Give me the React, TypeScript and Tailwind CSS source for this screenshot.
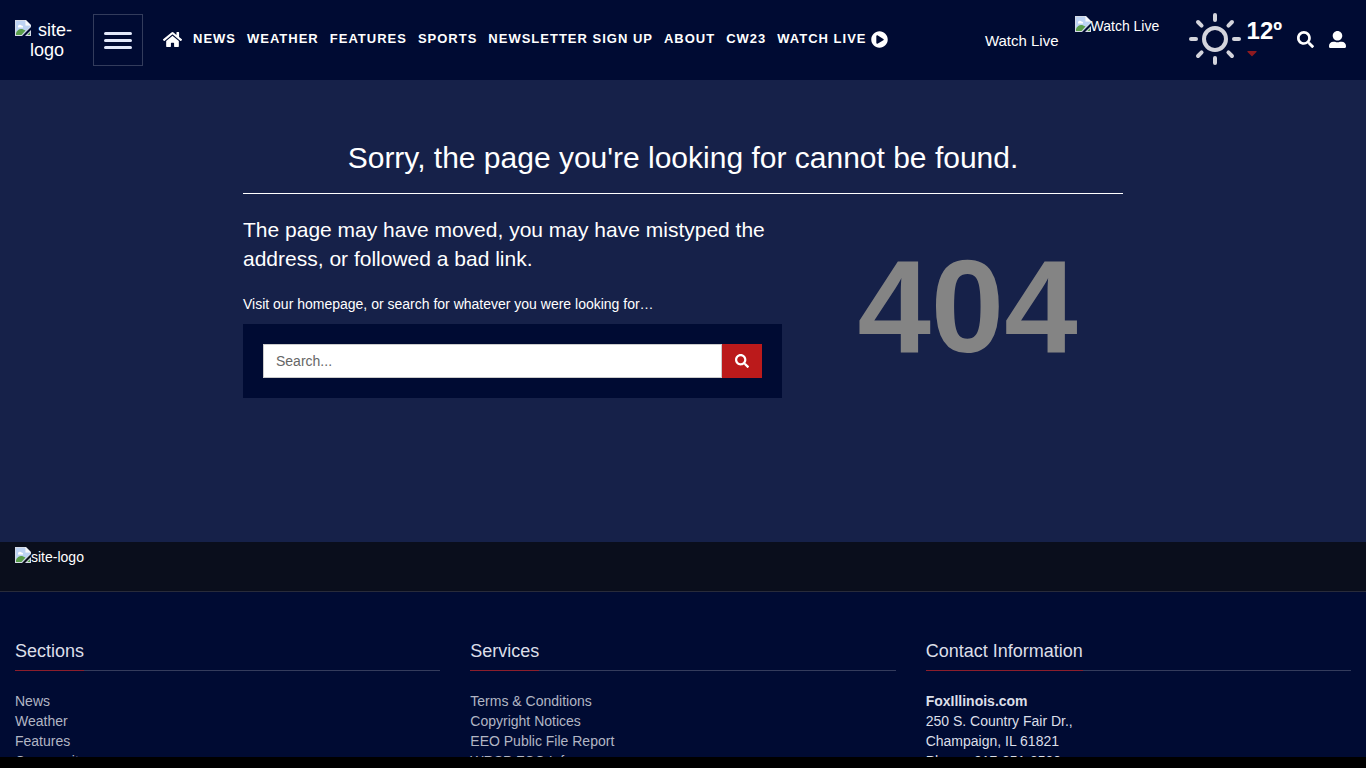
import React from 'react';
import { FaCaretDown, FaHome, FaPlayCircle, FaSearch, FaUserAlt } from 'react-icons/fa';

interface FooterColumnProps {
  title: string;
  children: React.ReactNode;
}

const navigation = ['News', 'Weather', 'Features', 'Sports', 'Newsletter Sign Up', 'About', 'CW23'];

const sections = ['News', 'Weather', 'Features', 'Community'];

const services = ['Terms & Conditions', 'Copyright Notices', 'EEO Public File Report', 'WRSP FCC Info'];

const rays = [0, 45, 90, 135, 180, 225, 270, 315];

const BrokenImage: React.FC<{ className?: string }> = ({ className }) => (
  <svg viewBox="0 0 16 16" className={`h-4 w-4 shrink-0 ${className ?? ''}`} aria-hidden="true">
    <path d="M0 0h11l5 5v2L7 16H0z" fill="#d5dbe6" />
    <path d="M1 1h9.500v4.500H15v1.200L6.700 15H1z" fill="#bdd3f3" />
    <path d="M3 6.500a2 2 0 0 1 3.500-1A1.500 1.500 0 0 1 8 7.500H3z" fill="#fff" />
    <path d="M1 13c2-4 5-5.500 9.500-2.500L6.500 15H1z" fill="#5a9e4a" />
    <path d="M10.500 0v5.500H16z" fill="#f7f9fc" />
    <path d="M16 10v6h-6z" fill="#d5dbe6" />
    <path d="M15 12.300V15h-2.700z" fill="#5a9e4a" />
  </svg>
);

const SunIcon = () => (
  <svg viewBox="0 0 52 52" className="h-[52px] w-[52px]" fill="none" stroke="#d3d4dc" aria-hidden="true">
    <circle cx="26" cy="26" r="11" strokeWidth="4" />
    {rays.map((angle) => (
      <path key={angle} d="M26 2v5" strokeWidth="4" strokeLinecap="round" transform={`rotate(${angle} 26 26)`} />
    ))}
  </svg>
);

const Header = () => (
  <header className="flex h-20 items-center bg-[#000b33] px-[15px] text-white">
    <a href="#" className="block w-16 text-center text-lg leading-5">
      <BrokenImage className="float-left" />
      site-logo
    </a>
    <button
      type="button"
      aria-label="Menu"
      className="ml-[14px] flex h-[52px] w-[50px] flex-col items-center justify-center gap-1 border border-[#333c5c]"
    >
      <span className="h-[3px] w-7 rounded-full bg-[#e3e9fb]" />
      <span className="h-[3px] w-7 rounded-full bg-[#e3e9fb]" />
      <span className="h-[3px] w-7 rounded-full bg-[#e3e9fb]" />
    </button>

    <nav className="ml-5 flex items-center gap-[11px] pb-0.5 text-[13px] font-bold tracking-[1px] whitespace-nowrap uppercase">
      <a href="#" aria-label="Home">
        <FaHome className="h-[19px] w-[19px]" />
      </a>
      {navigation.map((item) => (
        <a key={item} href="#">
          {item}
        </a>
      ))}
      <a href="#" className="flex items-center gap-1">
        Watch Live
        <FaPlayCircle className="h-[17px] w-[17px]" />
      </a>
    </nav>

    <div className="ml-auto flex items-center pb-0.5">
      <a href="#" className="pt-1 text-[15px]">
        Watch Live
      </a>
      <a href="#" className="ml-4 flex h-[46px] w-[98px] items-start text-sm">
        <BrokenImage />
        <span className="whitespace-nowrap">Watch Live</span>
      </a>
      <a href="#" className="ml-4 flex items-center gap-[6px]">
        <SunIcon />
        <span className="flex flex-col">
          <span className="text-2xl leading-7 font-bold">12º</span>
          <FaCaretDown className="h-4 w-[10px] text-[#8e1a20]" />
        </span>
      </a>
      <button type="button" aria-label="Search" className="ml-[15px]">
        <FaSearch className="h-[17px] w-[17px]" />
      </button>
      <button type="button" aria-label="Account" className="mr-[5px] ml-[15px]">
        <FaUserAlt className="h-[17px] w-[17px]" />
      </button>
    </div>
  </header>
);

const NotFound = () => (
  <main className="bg-[#162149] pt-15 pb-36 text-white">
    <div className="mx-auto max-w-[880px]">
      <h1 className="border-b border-white pb-[17px] text-center text-3xl">
        Sorry, the page you're looking for cannot be found.
      </h1>
      <div className="flex gap-[30px]">
        <div className="flex-1 pt-[21px]">
          <h2 className="text-[21px] leading-[29px]">
            The page may have moved, you may have mistyped the address, or followed a bad link.
          </h2>
          <p className="mt-[21px] text-sm">Visit our homepage, or search for whatever you were looking for…</p>
          <form className="mt-[10px] flex bg-[#000b33] p-5" onSubmit={(e) => e.preventDefault()}>
            <input
              type="text"
              aria-label="Search"
              placeholder="Search..."
              className="h-[34px] min-w-0 flex-1 border border-[#ccc] bg-white px-3 text-sm text-[#555] placeholder:text-[#666]"
            />
            <button type="submit" aria-label="Search" className="flex w-10 items-center justify-center bg-[#bb1a1b]">
              <FaSearch className="h-[14px] w-[14px]" />
            </button>
          </form>
        </div>
        <div className="w-[311px] pt-[47px] text-center text-[132px] leading-none font-bold text-[#848484]">404</div>
      </div>
    </div>
  </main>
);

const FooterColumn: React.FC<FooterColumnProps> = ({ title, children }) => (
  <section>
    <h3 className="flex border-b border-[#343c5c] text-lg text-[#dcdfe8]">
      <span className="-mb-px border-b border-[#8c1e2c] pb-[5px]">{title}</span>
    </h3>
    <div className="mt-5 text-sm">{children}</div>
  </section>
);

const LinkList: React.FC<{ items: string[] }> = ({ items }) => (
  <ul className="text-[#b2b6c4]">
    {items.map((item) => (
      <li key={item}>
        <a href="#">{item}</a>
      </li>
    ))}
  </ul>
);

const Footer = () => (
  <footer className="bg-[#000b33]">
    <div className="h-[50px] border-b border-[#282b3a] bg-[#0a0e1c] px-[15px] pt-[5px]">
      <a href="#" className="flex text-sm text-white">
        <BrokenImage />
        site-logo
      </a>
    </div>
    <div className="grid grid-cols-3 gap-[30px] px-[15px] pt-[45px]">
      <FooterColumn title="Sections">
        <LinkList items={sections} />
      </FooterColumn>
      <FooterColumn title="Services">
        <LinkList items={services} />
      </FooterColumn>
      <FooterColumn title="Contact Information">
        <address className="text-[#dcdfe8] not-italic">
          <strong>FoxIllinois.com</strong>
          <br />
          250 S. Country Fair Dr.,
          <br />
          Champaign, IL 61821
          <br />
          Phone: 217-351-8500
        </address>
      </FooterColumn>
    </div>
  </footer>
);

export default function App() {
  return (
    <div className="min-h-screen bg-[#000b33] font-['Liberation_Sans',Arial,sans-serif]">
      <Header />
      <NotFound />
      <Footer />
      {/* Sticky bar along the bottom of the window */}
      <div className="fixed inset-x-0 bottom-0 h-[11px] bg-black" />
    </div>
  );
}
